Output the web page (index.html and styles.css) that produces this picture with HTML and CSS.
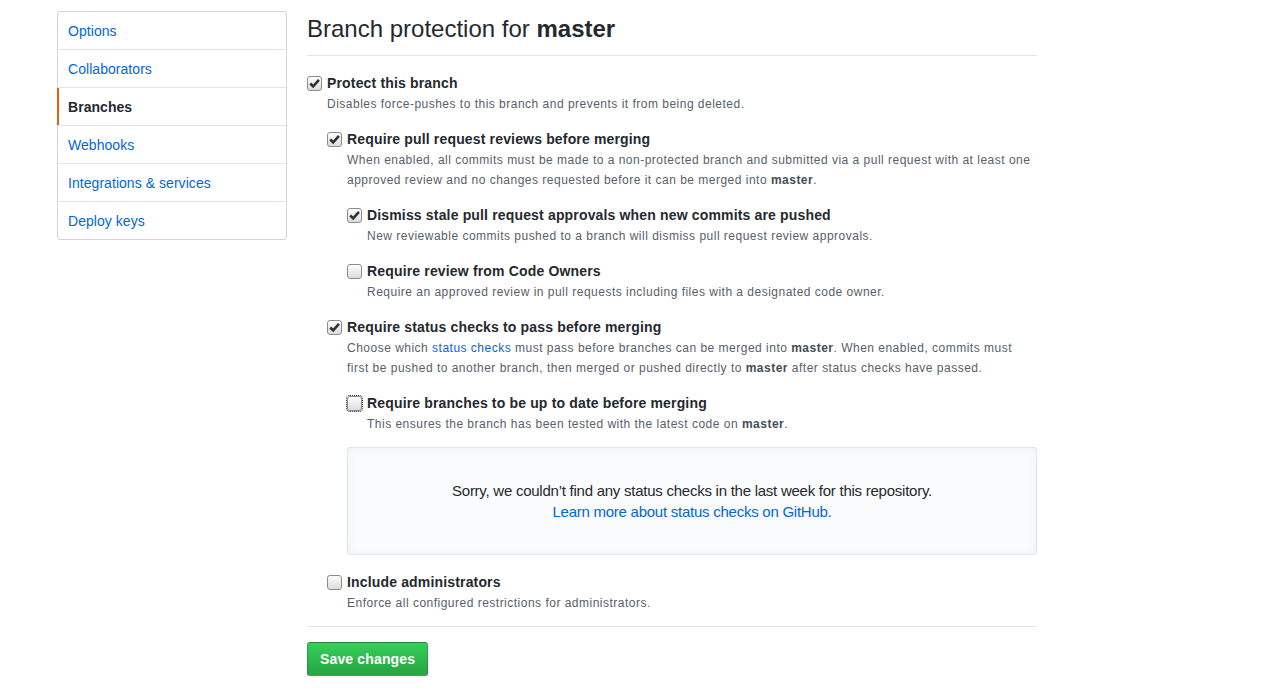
FILE: index.html
```html
<!DOCTYPE html>
<html>
<head>
<meta charset="utf-8">
<link rel="stylesheet" href="styles.css">
</head>
<body>
<div class="page">
  <nav class="menu">
    <a class="menu-item" href="#">Options</a>
    <a class="menu-item" href="#">Collaborators</a>
    <a class="menu-item selected" href="#">Branches</a>
    <a class="menu-item" href="#">Webhooks</a>
    <a class="menu-item" href="#">Integrations &amp; services</a>
    <a class="menu-item" href="#">Deploy keys</a>
  </nav>
  <main class="main">
    <div class="subhead"><h2 class="subhead-heading">Branch protection for <strong>master</strong></h2></div>

    <div class="opt top">
      <span class="cb checked"><svg viewBox="0 0 14 14"><path d="M2.4 7 L5.6 10.2 L11.8 3.2" /></svg></span>
      <div class="opt-body">
        <div class="label">Protect this branch</div>
        <p class="note">Disables force-pushes to this branch and prevents it from being deleted.</p>

        <div class="opt">
          <span class="cb checked"><svg viewBox="0 0 14 14"><path d="M2.4 7 L5.6 10.2 L11.8 3.2" /></svg></span>
          <div class="opt-body">
            <div class="label">Require pull request reviews before merging</div>
            <p class="note">When enabled, all commits must be made to a non-protected branch and submitted via a pull request with at least one approved review and no changes requested before it can be merged into <strong>master</strong>.</p>

            <div class="opt">
              <span class="cb checked"><svg viewBox="0 0 14 14"><path d="M2.4 7 L5.6 10.2 L11.8 3.2" /></svg></span>
              <div class="opt-body">
                <div class="label">Dismiss stale pull request approvals when new commits are pushed</div>
                <p class="note">New reviewable commits pushed to a branch will dismiss pull request review approvals.</p>
              </div>
            </div>

            <div class="opt">
              <span class="cb"></span>
              <div class="opt-body">
                <div class="label">Require review from Code Owners</div>
                <p class="note">Require an approved review in pull requests including files with a designated code owner.</p>
              </div>
            </div>
          </div>
        </div>

        <div class="opt">
          <span class="cb checked"><svg viewBox="0 0 14 14"><path d="M2.4 7 L5.6 10.2 L11.8 3.2" /></svg></span>
          <div class="opt-body">
            <div class="label">Require status checks to pass before merging</div>
            <p class="note">Choose which <a href="#">status checks</a> must pass before branches can be merged into <strong>master</strong>. When enabled, commits must first be pushed to another branch, then merged or pushed directly to <strong>master</strong> after status checks have passed.</p>

            <div class="opt">
              <span class="cb focused"></span>
              <div class="opt-body">
                <div class="label">Require branches to be up to date before merging</div>
                <p class="note">This ensures the branch has been tested with the latest code on <strong>master</strong>.</p>
              </div>
            </div>

            <div class="blankslate">
              <p>Sorry, we couldn’t find any status checks in the last week for this repository.<br>
              <a href="#">Learn more about status checks on GitHub.</a></p>
            </div>
          </div>
        </div>

        <div class="opt admins">
          <span class="cb"></span>
          <div class="opt-body">
            <div class="label">Include administrators</div>
            <p class="note">Enforce all configured restrictions for administrators.</p>
          </div>
        </div>
      </div>
    </div>

    <hr class="sep">
    <button class="btn-primary" type="button">Save changes</button>
  </main>
</div>
</body>
</html>
```

FILE: styles.css
```css
* { box-sizing: border-box; }
html, body { margin: 0; padding: 0; background: #fff; }
body {
  font-family: "Liberation Sans", Arial, sans-serif;
  font-size: 14px;
  line-height: 1.5;
  color: #24292e;
}
a { color: #0366d6; text-decoration: none; }

.page {
  display: flex;
  gap: 20px;
  padding: 12px 0 0 57px;
  width: 1037px;
  align-items: flex-start;
}

.menu {
  width: 230px;
  flex: none;
  border: 1px solid #d1d5da;
  border-radius: 3px;
  display: flex;
  flex-direction: column;
  margin-top: -1px;
}
.menu-item {
  position: relative;
  display: block;
  padding: 9px 10px 7px;
  line-height: 21px;
  border-bottom: 1px solid #e1e4e8;
  letter-spacing: 0.05px;
}
.menu-item:last-child { border-bottom: 0; }
.menu-item.selected {
  font-weight: bold;
  color: #24292e;
}
.menu-item.selected::before {
  content: "";
  position: absolute;
  left: -1px;
  top: 0;
  bottom: 0;
  width: 2px;
  background: #e36209;
}

.main {
  width: 730px;
  flex: none;
  margin-top: -1px;
}
.subhead {
  padding-bottom: 8px;
  border-bottom: 1px solid #e1e4e8;
  margin-bottom: 17px;
}
.subhead-heading {
  margin: 0;
  font-size: 24px;
  font-weight: normal;
  line-height: 36px;
}

.opt {
  display: grid;
  grid-template-columns: 20px 1fr;
  margin: 15px 0 0;
}
.opt.top { margin-top: 0; }
.opt.admins { margin-top: 17px; }
.opt-body { min-width: 0; }
.label {
  font-weight: bold;
  line-height: 21px;
  letter-spacing: 0.16px;
}
.note {
  margin: 0;
  font-size: 12px;
  line-height: 20px;
  color: #586069;
  letter-spacing: 0.49px;
}
.note strong { color: #444d56; }

.cb {
  display: block;
  width: 15px;
  height: 15px;
  margin-top: 3px;
  border: 1px solid #8c8c8c;
  border-radius: 3px;
  background: linear-gradient(#fdfdfd, #dcdcdc);
  box-shadow: inset 0 1px 0 #fff;
}
.cb svg {
  display: block;
  width: 13px;
  height: 13px;
  fill: none;
  stroke: #2e3436;
  stroke-width: 2.8;
  stroke-linecap: butt;
  stroke-linejoin: miter;
}
.cb.focused {
  outline: 1px dotted #222;
  outline-offset: 0;
}

.blankslate {
  margin: 13px 0 0;
  padding: 32px;
  border: 1px solid #e1e4e8;
  border-radius: 3px;
  background: #fafbfc;
  text-align: center;
  box-shadow: inset 0 0 10px rgba(27,31,35,0.05);
}
.blankslate p {
  margin: 0;
  font-size: 15px;
  line-height: 21px;
  letter-spacing: -0.25px;
}

.sep {
  margin: 13px 0 15px;
  border: 0;
  border-top: 1px solid #e1e4e8;
  height: 0;
}

.btn-primary {
  display: inline-block;
  font-family: inherit;
  font-size: 14px;
  font-weight: bold;
  line-height: 20px;
  padding: 6px 12px;
  color: #fff;
  background: linear-gradient(-180deg, #34d058 0%, #28a745 90%);
  border: 1px solid rgba(27,31,35,0.2);
  border-radius: 3px;
  cursor: pointer;
  letter-spacing: 0.15px;
}
```
